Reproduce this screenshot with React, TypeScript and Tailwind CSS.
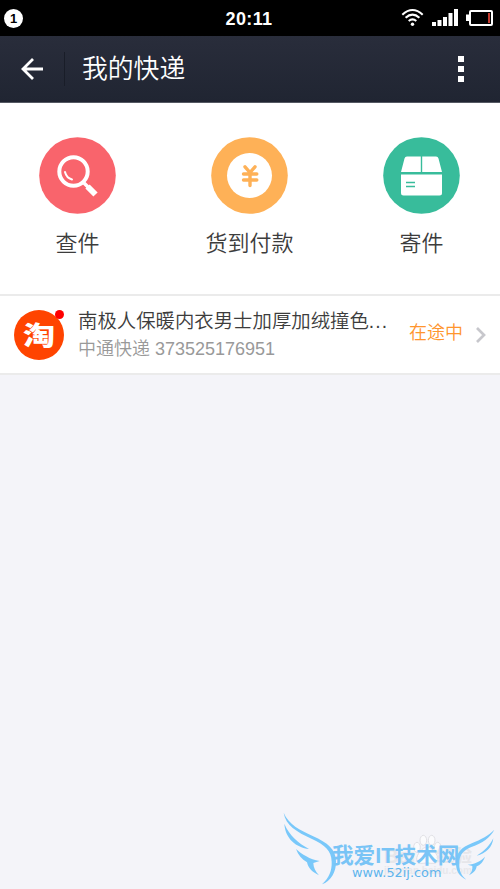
import type { ReactNode } from 'react';

function StatusBar() {
    return (
        <div className="flex h-9 items-center justify-between bg-black pl-1 pr-[7px] text-white">
            <div className="flex h-[19px] w-[93px] items-center">
                <span className="flex h-[19px] w-[19px] items-center justify-center rounded-full bg-white text-[13px] font-bold leading-none text-black">1</span>
            </div>
            <span className="pt-[2px] text-[18px] font-bold leading-none tracking-[0.4px]">20:11</span>
            <div className="flex h-9 w-[92px] items-center">
                <svg width="92" height="36" viewBox="0 0 92 36" fill="none">
                    <g stroke="white" strokeWidth="2.1">
                        <path d="M1.3 14.7Q11.5 5.3 21.7 14.7" />
                        <path d="M4.6 17.8Q11.5 11.6 18.4 17.8" />
                        <path d="M7.7 21Q11.5 17.7 15.3 21" />
                    </g>
                    <circle cx="11.5" cy="24.3" r="1.7" fill="white" />
                    <path d="M31 22h4v4h-4zM36.5 20h4v6h-4zM42 17h4v9h-4zM47.5 13h4v13h-4zM53 9h4v17h-4z" fill="white" />
                    <path d="M68 14.5h-3V21h3z" fill="white" />
                    <rect x="69" y="11" width="22" height="14" rx="1" stroke="white" strokeWidth="2" />
                    <rect x="87" y="13" width="2" height="10" fill="#c43c30" />
                </svg>
            </div>
        </div>
    );
}

function Header() {
    return (
        <header className="flex h-[67px] items-center border-b border-[#555963] bg-linear-to-b from-[#292d3b] to-[#202532] text-white">
            <div className="flex h-[34px] w-[65px] items-center border-r border-[#191d28] pl-[21px]">
                <svg width="23" height="22" viewBox="0 0 23 22" fill="none" stroke="white" strokeWidth="2.8">
                    <path d="M22 11H2M12 1L2 11l10 10" />
                </svg>
            </div>
            <h1 className="ml-[17px] flex-1 pt-[2px] text-[25.8px] font-[350] leading-none">我的快递</h1>
            <div className="mr-9 flex w-[6px] flex-col gap-1">
                <span className="h-[6px] bg-white" />
                <span className="h-[6px] bg-white" />
                <span className="h-[6px] bg-white" />
            </div>
        </header>
    );
}

function Action({ label, children }: { label: string; children: ReactNode }) {
    return (
        <div className="flex w-[100px] flex-col items-center">
            <svg width="77" height="77" viewBox="0 0 77 77" fill="none">{children}</svg>
            <span className="mt-[17px] pl-px text-[22px] font-[350] leading-[26px] text-[#3c3c3c]">{label}</span>
        </div>
    );
}

function Watermark() {
    return (
        <div className="absolute bottom-0 right-0 h-[119px] w-[230px] overflow-hidden">
            {/* paw and pale lettering behind the wings */}
            <svg className="absolute inset-0" width="230" height="119" viewBox="0 0 690 357">
                <g fill="#fbfbfd" stroke="#e0e0e5" strokeWidth="3">
                    <ellipse cx="441" cy="232" rx="10" ry="15" />
                    <ellipse cx="460" cy="211" rx="10" ry="15" />
                    <ellipse cx="485" cy="211" rx="10" ry="15" />
                    <ellipse cx="503" cy="232" rx="10" ry="15" />
                    <path d="M471 231c-14 0-31 23-31 36 0 19 20 12 31 12s33 7 33-12c0-13-19-36-33-36z" />
                </g>
            </svg>
            <span className="absolute left-[114px] top-[76px] whitespace-nowrap text-[20px] font-bold leading-none text-[#e6e6ea]">Bai</span>
            <span className="absolute left-[166px] top-[77px] whitespace-nowrap text-[18px] font-bold leading-none text-[#e6e6ea]">经验</span>
            <span className="absolute left-[114px] top-[96px] whitespace-nowrap text-[10px] font-bold leading-none text-[#e8e8ec]">jingyan.baidu.com</span>
            <svg className="absolute inset-0" width="230" height="119" viewBox="0 0 690 357">
                <g fill="#79c8fa">
                    <path d="M41 128C56 164 90 180 128 198C174 219 197 237 198 273C199 307 182 334 156 343C178 322 186 302 185 275C184 242 165 225 126 207C79 185 47 166 41 128z" />
                    <path d="M43 161C57 196 87 220 117 237C79 232 46 207 43 161z" />
                    <path d="M78 237C96 253 119 268 149 273L130 279C130 292 137 306 147 316C128 307 115 295 111 277C95 268 85 255 78 237z" />
                    <path d="M673 179C660 203 638 219 604 231C575 242 568 260 568 281C567 302 574 316 589 329C566 319 557 300 558 276C559 247 575 232 602 221C636 207 656 196 673 179z" />
                    <path d="M670 205C667 232 648 251 620 257C644 243 658 228 670 205z" />
                    <path d="M645 260C639 276 632 284 620 289C618 301 612 308 597 316C605 307 608 299 607 288L593 284C615 282 631 274 645 260z" />
                </g>
            </svg>
            <span className="absolute left-[62px] top-[75px] origin-left scale-x-[0.94] scale-y-[0.92] whitespace-nowrap text-[23px] font-bold leading-none text-[#79c4f6]">我爱IT技术网</span>
            <span className="absolute left-[82px] top-[97px] origin-left scale-x-[1.07] whitespace-nowrap font-['DejaVu_Sans'] text-[12px] leading-none text-[#5eb4ed]">www.52ij.com</span>
        </div>
    );
}

export default function App() {
    return (
        <div className="relative h-[889px] w-[500px] overflow-hidden bg-[#f4f4f9] font-['Liberation_Sans','Noto_Sans_CJK_SC',sans-serif]">
            <StatusBar />
            <Header />

            <div className="flex h-[193px] justify-between border-b-2 border-[#ebebeb] bg-white pl-[27px] pr-[29px] pt-[34px]">
                <Action label="查件">
                    <circle cx="38.5" cy="38.5" r="38.3" fill="#f9646c" />
                    <circle cx="34.5" cy="34.5" r="14.2" stroke="white" strokeWidth="4" />
                    <path d="M26 35Q27.500 41 33 42.500" stroke="white" strokeWidth="2" strokeLinecap="round" />
                    <path d="M44 45L49 50" stroke="white" strokeWidth="3.5" />
                    <path d="M48.500 49.500L56.500 57.500" stroke="white" strokeWidth="6" />
                </Action>
                <Action label="货到付款">
                    <circle cx="38.5" cy="38.5" r="38.3" fill="#feb157" />
                    <circle cx="38.5" cy="38.5" r="22.5" fill="white" />
                    <path d="M34 29.800l5 5.700 5-5.700M39 35v13.500M32.500 37h13.300M32.500 43h13.300" stroke="#feb157" strokeWidth="3.4" strokeLinecap="round" />
                </Action>
                <Action label="寄件">
                    <circle cx="38.5" cy="38.5" r="38.3" fill="#38bc9b" />
                    <path d="M24 19.500H37.800V35H18L21.500 21.500Q22 19.500 24 19.500zM39.200 19.500H53Q55 19.500 55.500 21.500L59 35H39.200z" fill="white" />
                    <path d="M18 37.500H59V56Q59 58.500 56.500 58.500H20.500Q18 58.500 18 56z" fill="white" />
                    <path d="M23 45.500h9M23 49.500h9" stroke="#38bc9b" strokeWidth="1.5" />
                </Action>
            </div>

            <div className="flex h-[79px] items-center border-b-2 border-[#ebebeb] bg-white px-[14px]">
                <div className="relative flex h-[50px] w-[50px] items-center justify-center rounded-full bg-[#ff4400] text-[32px] font-black leading-none text-white">
                    <span className="-mt-px scale-y-[0.82] font-['Noto_Sans_CJK_SC']">淘</span>
                    <span className="absolute right-0 top-0 h-[9px] w-[9px] rounded-full bg-[#ff0000]" />
                </div>
                <div className="ml-[14px] w-[311px] pt-px">
                    <div className="text-[19.4px] font-[350] leading-[28px] text-[#3c3c3c]">南极人保暖内衣男士加厚加绒撞色<span className="tracking-[1px]">...</span></div>
                    <div className="text-[18px] font-[350] leading-[28px] text-[#999]">中通快递 373525176951</div>
                </div>
                <span className="mb-[3px] ml-auto mr-px text-[18px] font-[350] text-[#ff952d]">在途中</span>
                <svg className="ml-3" width="10" height="16" viewBox="0 0 10 16" fill="none" stroke="#c7c7cc" strokeWidth="2.7">
                    <path d="M1 1l7 7-7 7" />
                </svg>
            </div>

            <Watermark />
        </div>
    );
}
